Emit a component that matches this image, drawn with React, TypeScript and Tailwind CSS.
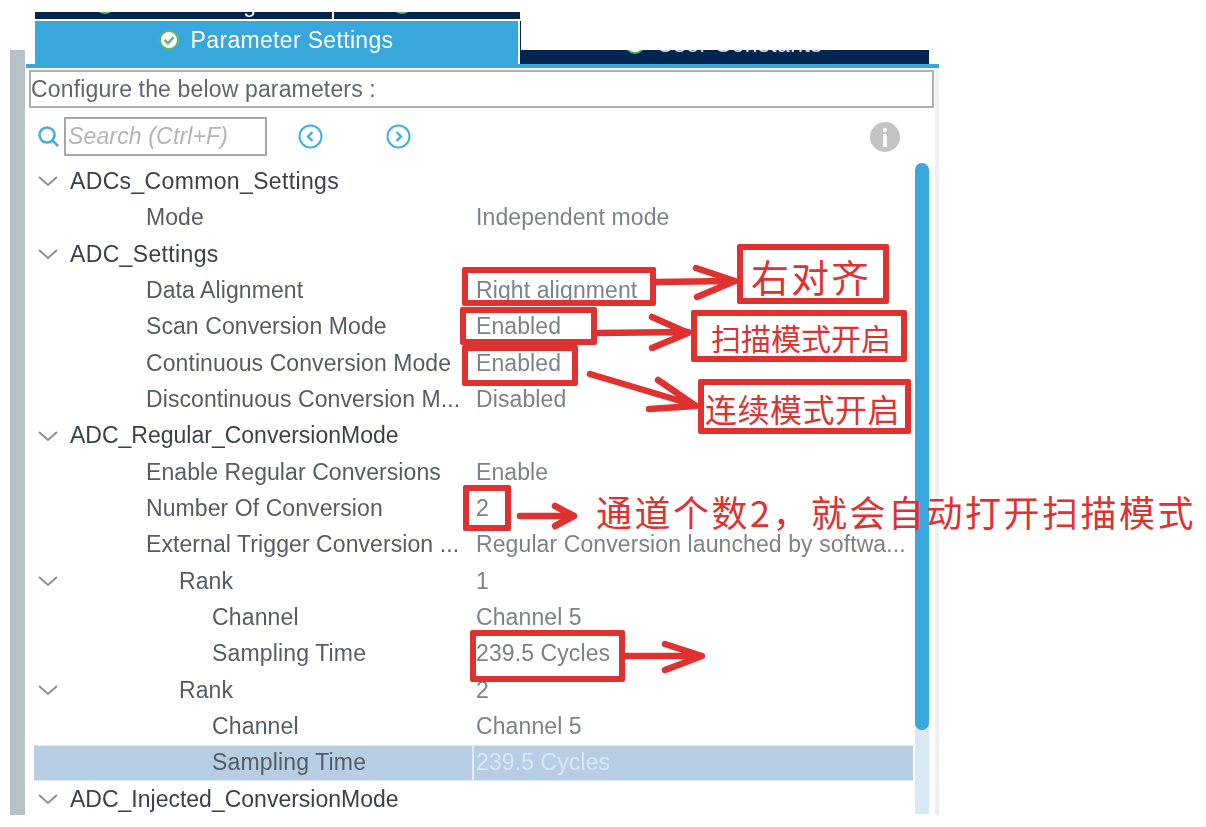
import React from "react";

const font = { fontFamily: '"Liberation Sans", "Roboto", sans-serif' };
const cjk = { fontFamily: '"Noto Sans CJK SC", "Noto Sans", sans-serif' };

type Row = { label: string; value?: string; level: 0 | 1 | 2 | 3 | 4; open?: boolean; selected?: boolean };

const rows: Row[] = [
  { label: "ADCs_Common_Settings", level: 0, open: true },
  { label: "Mode", value: "Independent mode", level: 1 },
  { label: "ADC_Settings", level: 0, open: true },
  { label: "Data Alignment", value: "Right alignment", level: 1 },
  { label: "Scan Conversion Mode", value: "Enabled", level: 1 },
  { label: "Continuous Conversion Mode", value: "Enabled", level: 1 },
  { label: "Discontinuous Conversion M...", value: "Disabled", level: 1 },
  { label: "ADC_Regular_ConversionMode", level: 4, open: true },
  { label: "Enable Regular Conversions", value: "Enable", level: 1 },
  { label: "Number Of Conversion", value: "2", level: 1 },
  { label: "External Trigger Conversion ...", value: "Regular Conversion launched by softwa...", level: 1 },
  { label: "Rank", value: "1", level: 2, open: true },
  { label: "Channel", value: "Channel 5", level: 3 },
  { label: "Sampling Time", value: "239.5 Cycles", level: 3 },
  { label: "Rank", value: "2", level: 2, open: true },
  { label: "Channel", value: "Channel 5", level: 3 },
  { label: "Sampling Time", value: "239.5 Cycles", level: 3, selected: true },
  { label: "ADC_Injected_ConversionMode", level: 4, open: true },
];

const indent = {
  0: "pl-0 tracking-[0.35px]",
  4: "pl-0 tracking-[0px]",
  1: "pl-[76px] tracking-[0.08px]",
  2: "pl-[109px] tracking-[0.08px]",
  3: "pl-[142px] tracking-[0.15px]",
} as const;

function Chevron() {
  return (
    <svg width="20" height="12" viewBox="0 0 20 12" fill="none" stroke="#8a9096" strokeWidth="2">
      <path d="M1 2 L10 10 L19 2" />
    </svg>
  );
}

function Check({ size = 20 }: { size?: number }) {
  return (
    <svg width={size} height={size} viewBox="0 0 20 20" className="shrink-0">
      <circle cx="10" cy="10" r="9" fill="#ffffff" stroke="#5cb56d" strokeWidth="2" />
      <path d="M5.5 10 L9 13.2 L14.5 7.2" fill="none" stroke="#5cb56d" strokeWidth="2.4" />
    </svg>
  );
}

function Nav({ dir }: { dir: "l" | "r" }) {
  return (
    <svg width="25" height="25" viewBox="0 0 25 25" fill="none" stroke="#45acdf" strokeWidth="2">
      <circle cx="12.5" cy="12.5" r="11" />
      <path d={dir === "l" ? "M14.5 8 L10 12.5 L14.5 17" : "M10.5 8 L15 12.5 L10.5 17"} strokeWidth="2.4" />
    </svg>
  );
}

function RedBox({ className }: { className: string }) {
  return <div className={`absolute border-[6px] border-[#e03131] rounded-[2px] ${className}`} />;
}

export default function App() {
  return (
    <div className="relative w-[1206px] h-[827px] bg-white overflow-hidden" style={font}>
      <div className="flex pl-[10px] pt-[12px] blur-[0.5px]">
        <div className="mt-[38px] w-[15px] h-[765px] bg-[#b5c0c7]" />
        <div className="w-[914px] h-[803px] overflow-hidden">
          {/* tabs */}
          <div className="pl-[10px] w-[904px]">
            <div className="flex w-[485px] h-[7px] bg-[#04254f] text-white text-[23px]">
              <div className="w-[299px] h-[7px] overflow-hidden border-r-2 border-white">
                <div className="-mt-[26px] h-[36px] flex items-center gap-[8px] pl-[60px] whitespace-nowrap">
                  <Check /> <span>NVIC Settings</span>
                </div>
              </div>
              <div className="flex-1 h-[7px] overflow-hidden">
                <div className="-mt-[26px] h-[36px] flex items-center pl-[58px]">
                  <Check />
                </div>
              </div>
            </div>
            <div className="flex items-end mt-[2px] h-[43px]">
              <div className="w-[485px] h-[43px] bg-[#38a8dc] border-r-2 border-white flex items-center justify-center gap-[12px] pb-[5px] pr-[1px] text-white text-[23px] tracking-[0.33px] shadow-[1px_0_0_#04254f]">
                <Check />
                <span>Parameter Settings</span>
              </div>
              <div className="w-[409px] h-[14px] bg-[#04254f] overflow-hidden text-[#d8e2ea] text-[23px] tracking-[0.5px]">
                <div className="-mt-[24px] h-[36px] flex items-center pl-[105px] gap-[12px]">
                  <Check />
                  <span>User Constants</span>
                </div>
              </div>
            </div>
          </div>
          <div className="ml-[1px] h-[4px] bg-[#38a8dc]" />

          {/* panel */}
          <div className="flex h-[747px]">
            <div className="w-[910px]">
              <div className="ml-[4px] mt-[2px] w-[905px] h-[38px] border-2 border-[#aab0b5] flex items-center text-[23px] tracking-[0.15px] text-[#5f6670]">
                Configure the below parameters :
              </div>
              <div className="flex items-center h-[39px] mt-[9px] ml-[12px]">
                <svg width="24" height="24" viewBox="0 0 24 24" fill="none" stroke="#45acdf" strokeWidth="2.6">
                  <circle cx="10" cy="10" r="7.5" />
                  <path d="M15.5 15.5 L21 21" />
                </svg>
                <div className="ml-[3px] w-[203px] h-[39px] border-2 border-[#a6a6a6] flex items-center pl-[2px] italic text-[23px] tracking-[0.15px] text-[#b4b4b4]">
                  Search (Ctrl+F)
                </div>
                <div className="ml-[31px]"><Nav dir="l" /></div>
                <div className="ml-[63px]"><Nav dir="r" /></div>
                <svg className="ml-[459px]" width="30" height="30" viewBox="0 0 30 30">
                  <circle cx="15" cy="15" r="15" fill="#c3c3c3" />
                  <rect x="13.2" y="12" width="3.6" height="13" fill="#fff" />
                  <circle cx="15" cy="8" r="2.2" fill="#fff" />
                </svg>
              </div>
              <div className="flex mt-[7px]">
                <div className="ml-[9px] w-[879px]">
                  {rows.map((r, i) => (
                    <div key={i} className={`flex h-[36.35px] items-center text-[23px] ${r.selected ? "bg-[#b6cde4] border-y border-[#dce6f1]" : ""}`}>
                      <div className="w-[36px] pl-[4px] shrink-0">{r.open && <Chevron />}</div>
                      <div className={`w-[404px] shrink-0 self-stretch flex items-center whitespace-nowrap ${indent[r.level]} ${r.level === 0 || r.level === 4 ? "text-[#39414d]" : "text-[#555c66]"} ${r.selected ? "border-r-2 border-[#e2ebf4]" : ""}`}>
                        {r.label}
                      </div>
                      <div className={`pl-[2px] tracking-[0.1px] whitespace-nowrap ${r.selected ? "text-[#dbe6f1]" : "text-[#7c828a]"}`}>{r.value}</div>
                    </div>
                  ))}
                </div>
                <div className="ml-[2px] w-[14px] h-[651px] bg-[#d9e8f5] rounded-t-full">
                  <div className="h-[567px] bg-[#38a8dc] rounded-full" />
                </div>
              </div>
            </div>
            <div className="w-[4px] bg-[#eff0f2]" />
          </div>
        </div>
      </div>

      {/* annotations */}
      <RedBox className="left-[462px] top-[267px] w-[194px] h-[39px]" />
      <RedBox className="left-[460px] top-[307px] w-[137px] h-[38px]" />
      <RedBox className="left-[462px] top-[345px] w-[116px] h-[41px]" />
      <RedBox className="left-[463px] top-[485px] w-[48px] h-[46px]" />
      <RedBox className="left-[470px] top-[630px] w-[155px] h-[52px]" />
      <RedBox className="left-[737px] top-[244px] w-[152px] h-[60px]" />
      <RedBox className="left-[691px] top-[310px] w-[216px] h-[52px]" />
      <RedBox className="left-[698px] top-[379px] w-[213px] h-[55px]" />

      <svg className="absolute left-0 top-0" width="1206" height="827" fill="none" stroke="#e03131" strokeWidth="6.5" strokeLinecap="round" strokeLinejoin="round">
        <path d="M656 282 L732 281 M696 268 L735 281 L697 297" />
        <path d="M597 333 L688 332 M652 317 L688 333 L652 348" />
        <path d="M590 374 L694 405 M658 380 L696 406 L649 409" />
        <path d="M520 516 L570 516 M555 506 L574 516 L555 526" />
        <path d="M624 656 L698 656 M665 644 L702 656 L665 670" />
      </svg>

      <div className="absolute left-[751px] top-[250px] text-[38px] leading-[52px] tracking-[2px] text-[#e03131] whitespace-nowrap" style={cjk}>右对齐</div>
      <div className="absolute left-[711px] top-[316px] text-[30px] leading-[42px] text-[#e03131] whitespace-nowrap" style={cjk}>扫描模式开启</div>
      <div className="absolute left-[705px] top-[386px] text-[32px] leading-[44px] tracking-[0.5px] text-[#e03131] whitespace-nowrap" style={cjk}>连续模式开启</div>
      <div className="absolute left-[596px] top-[487px] text-[36px] leading-[48px] tracking-[2.5px] text-[#e03131] whitespace-nowrap" style={cjk}>通道个数2，就会自动打开扫描模式</div>
    </div>
  );
}
